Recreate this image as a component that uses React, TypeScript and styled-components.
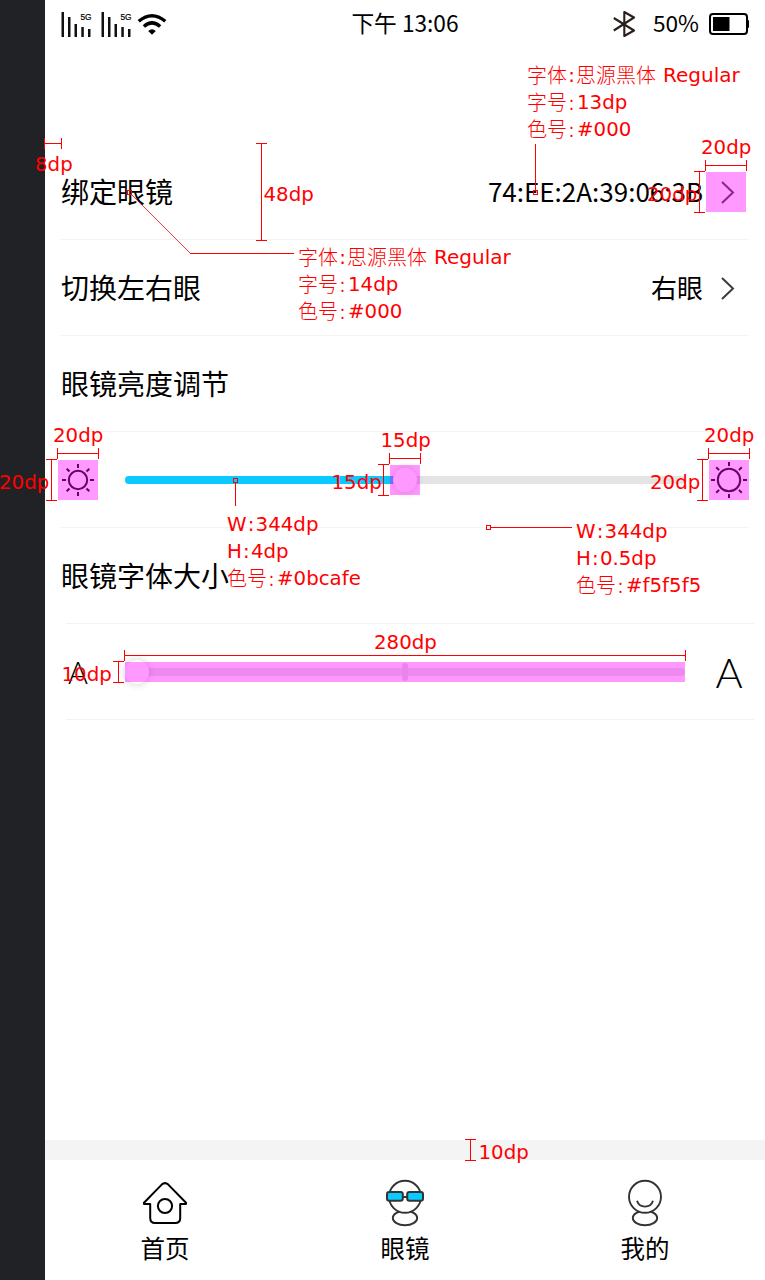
import React from "react";
import styled, { createGlobalStyle } from "styled-components";

const GlobalStyle = createGlobalStyle`
  *, *::before, *::after { box-sizing: border-box; }
  body { margin: 0; background: #fff; }
`;

const Board = styled.div`
  position: relative;
  display: flex;
  width: 765px;
  height: 1280px;
  overflow: hidden;
  color: #000;
  font-family: "Noto Sans CJK SC", sans-serif;
`;

const Gutter = styled.div`
  flex: 0 0 45px;
  background: #212226;
`;

const Screen = styled.div`
  flex: 1;
  display: flex;
  flex-direction: column;
  background: #fff;
`;

const StatusBar = styled.header`
  display: grid;
  grid-template-columns: 1fr auto 1fr;
  align-items: center;
  height: 48px;
  padding: 0 16px;
  margin-bottom: 96px;
  font-size: 23px;
  line-height: 46px;
`;

const Clock = styled.span`
  height: 48px;
  font-size: 22.7px;
`;

const StatusGroup = styled.div<{ $end?: boolean }>`
  display: flex;
  align-items: center;
  justify-content: ${(p) => (p.$end ? "flex-end" : "flex-start")};
`;

const Percent = styled.span`
  height: 48px;
  margin: 0 10px 0 17px;
  font-size: 22.7px;
`;

const Icon = styled.svg`
  display: block;
  flex: none;
  overflow: visible;
`;

const Row = styled.div<{ $lineShift?: boolean }>`
  position: relative;
  display: flex;
  align-items: center;
  height: 96px;
  margin: 0 16px;
  &::after {
    content: "";
    position: absolute;
    left: ${(p) => (p.$lineShift ? 5 : 0)}px;
    right: ${(p) => (p.$lineShift ? -5 : 0)}px;
    bottom: 0;
    height: 1px;
    background: #f3f3f3;
  }
`;

const RowTitle = styled.span`
  flex: 1;
  font-size: 28px;
  line-height: 40px;
  padding-bottom: 2px;
`;

const RowValue = styled.span`
  font-size: 26px;
  line-height: 40px;
  padding-bottom: 2px;
  margin-right: 3px;
`;

const ChevronBox = styled.span`
  width: 40px;
  height: 40px;
  margin-right: 3px;
`;

const SliderCap = styled.div<{ $offset: number; $width: number }>`
  display: flex;
  justify-content: center;
  width: ${(p) => p.$width}px;
  margin-left: ${(p) => p.$offset}px;
`;

const Track = styled.div<{ $gap: number }>`
  position: relative;
  width: 560px;
  height: 8px;
  margin-left: ${(p) => p.$gap}px;
  border-radius: 4px;
  background: #e4e4e4;
`;

const Fill = styled.div`
  width: 50%;
  height: 8px;
  border-radius: 4px;
  background: #0bcafe;
`;

const Knob = styled.div<{ $x: number }>`
  position: absolute;
  left: ${(p) => p.$x - 12}px;
  top: -8px;
  width: 24px;
  height: 24px;
  border-radius: 50%;
  background: #fff;
  box-shadow: 0 0 9px rgba(0, 0, 0, 0.2);
`;

const Tick = styled.div`
  position: absolute;
  left: 277px;
  top: -5px;
  width: 6px;
  height: 18px;
  border-radius: 3px;
  background: #dcdcdc;
`;

const Letter = styled.span<{ $size: number }>`
  font-family: Lato, sans-serif;
  font-weight: 300;
  font-size: ${(p) => p.$size}px;
  line-height: 48px;
`;

const TabBar = styled.nav`
  display: grid;
  grid-template-columns: repeat(3, 1fr);
  height: 140px;
  margin-top: auto;
  border-top: 20px solid #f4f4f4;
`;

const Tab = styled.div`
  display: flex;
  flex-direction: column;
  align-items: center;
  padding-top: 18px;
  font-size: 24.5px;
  line-height: 40px;
`;

/* Redline layer over the screen */

const Highlight = styled.div<{ $x: number; $y: number; $w: number; $h: number }>`
  position: absolute;
  left: ${(p) => p.$x}px;
  top: ${(p) => p.$y}px;
  width: ${(p) => p.$w}px;
  height: ${(p) => p.$h}px;
  background: rgba(255, 0, 255, 0.4);
`;

const Ruler = styled.div<{ $x: number; $y: number; $len: number; $vertical?: boolean }>`
  position: absolute;
  left: ${(p) => p.$x}px;
  top: ${(p) => p.$y}px;
  width: ${(p) => (p.$vertical ? 11 : p.$len)}px;
  height: ${(p) => (p.$vertical ? p.$len : 11)}px;
  border: 0 solid #f00;
  border-width: ${(p) => (p.$vertical ? "1px 0" : "0 1px")};
  &::before {
    content: "";
    position: absolute;
    background: #f00;
    ${(p) =>
      p.$vertical
        ? "left: 5px; top: 0; bottom: 0; width: 1px;"
        : "top: 5px; left: 0; right: 0; height: 1px;"}
  }
`;

const Note = styled.div<{ $x: number; $y: number }>`
  position: absolute;
  left: ${(p) => p.$x}px;
  top: ${(p) => p.$y}px;
  color: #f00;
  font-family: "DejaVu Sans", sans-serif;
  font-size: 19.8px;
  line-height: 27px;
  white-space: nowrap;
`;

const NoteLine = styled.div`
  display: flex;
  height: 27px;
`;

const Han = styled.span`
  font-family: "Noto Sans CJK SC", sans-serif;
  font-weight: 300;
  font-size: 20px;
  line-height: 25px;
`;

const Colon = styled.span`
  width: 9px;
  text-align: center;
`;

const ValueText = styled.span`
  margin-left: 1px;
`;

const FontName = styled.span`
  margin-left: 7px;
  font-size: 20px;
`;

const Leaders = styled.svg`
  position: absolute;
  left: 0;
  top: 0;
`;

const Signal = () => (
  <Icon width="40" height="48" viewBox="0 0 40 48">
    <g fill="#111">
      <rect x="0.5" y="12" width="2.5" height="25" />
      <rect x="7" y="17" width="2.5" height="20" />
      <rect x="13.5" y="24" width="2.5" height="13" />
      <rect x="20.3" y="27" width="2.5" height="10" />
      <rect x="27" y="29" width="2.5" height="8" />
    </g>
    <text
      x="19.5"
      y="19.8"
      fontSize="8.3"
      fontFamily="Liberation Sans, sans-serif"
      fill="#000"
      stroke="#000"
      strokeWidth="0.2"
    >
      5G
    </text>
  </Icon>
);

const Wifi = () => (
  <Icon width="28" height="48" viewBox="141 0 28 48">
    <g transform="translate(0.5 0)" fill="none" stroke="#000" strokeWidth="3.4">
      <path d="M138.2 21.3Q151.5 10.2 164.8 21.3" />
      <path d="M143.4 26.5Q151.5 19.2 159.6 26.5" />
      <path d="M147.7 31Q151.5 27.6 155.3 31L151.5 34.8Z" fill="#000" stroke="none" />
    </g>
  </Icon>
);

const Bluetooth = () => (
  <Icon width="24" height="48" viewBox="612 0 24 48">
    <path
      d="M613.8 18L634 30.5L624.3 36V12L634 17.5L613.8 30.5"
      fill="none"
      stroke="#2a1f1c"
      strokeWidth="2.1"
      strokeLinejoin="round"
    />
  </Icon>
);

const Battery = () => (
  <Icon width="40" height="48" viewBox="709 0 40 48">
    <rect x="710" y="14" width="37" height="20" rx="3" fill="none" stroke="#000" strokeWidth="2" />
    <rect x="713" y="17" width="16.5" height="14" fill="#000" />
    <rect x="747" y="20" width="2" height="8" rx="1" fill="#000" />
  </Icon>
);

const Chevron = () => (
  <ChevronBox>
    <Icon width="40" height="40" viewBox="0 0 40 40">
      <path d="M16 10L27 20.5L16 31" fill="none" stroke="#3c3c3c" strokeWidth="2" />
    </Icon>
  </ChevronBox>
);

const Sun = ({ r, inner, outer }: { r: number; inner: number; outer: number }) => (
  <Icon width="40" height="40" viewBox="-20 -20 40 40">
    <g fill="none" stroke="#000" strokeWidth="2">
      <circle r={r} />
      {[0, 45, 90, 135, 180, 225, 270, 315].map((a) => (
        <path key={a} d={`M0 ${-inner}V${-outer}`} transform={`rotate(${a})`} />
      ))}
    </g>
  </Icon>
);

const HomeIcon = () => (
  <Icon width="48" height="50" viewBox="141 1178 48 50">
    <g fill="none" stroke="#000" strokeWidth="2" strokeLinejoin="round">
      <path d="M144 1204V1202.8L161.7 1184.6Q165 1181.6 168.3 1184.6L186 1202.8V1204H180.2V1218Q180.2 1223 175.2 1223H155.2Q150.2 1223 150.2 1218V1204Z" />
      <circle cx="165" cy="1206" r="7.1" />
    </g>
  </Icon>
);

const PersonIcon = ({ glasses }: { glasses?: boolean }) => (
  <Icon width="48" height="50" viewBox="-24 1178 48 50">
    <g fill="#fff" stroke="#333" strokeWidth="1.9">
      <ellipse cx="0" cy="1218" rx="12.2" ry="7.2" />
      <circle cx="0" cy="1196.8" r="16" />
      {glasses ? (
        <g fill="#0bcafe" strokeWidth="2">
          <path d="M-2.5 1197H2.5" />
          <rect x="-18" y="1192" width="15.8" height="8.8" rx="2.2" />
          <rect x="2.2" y="1192" width="15.8" height="8.8" rx="2.2" />
        </g>
      ) : (
        <path d="M-8 1200.8C-5.5 1208.6 5.5 1208.6 8 1200.8" fill="none" />
      )}
    </g>
  </Icon>
);

const FontNote = ({ x, y, size }: { x: number; y: number; size: string }) => (
  <Note $x={x} $y={y}>
    <NoteLine>
      <Han>字体</Han>
      <Colon>:</Colon>
      <Han>思源黑体</Han>
      <FontName>Regular</FontName>
    </NoteLine>
    <NoteLine>
      <Han>字号</Han>
      <Colon>
        <Han>:</Han>
      </Colon>
      <ValueText>{size}</ValueText>
    </NoteLine>
    <NoteLine>
      <Han>色号</Han>
      <Colon>
        <Han>:</Han>
      </Colon>
      <ValueText>#000</ValueText>
    </NoteLine>
  </Note>
);

const SizeNote = ({ x, y, h, color }: { x: number; y: number; h: string; color: string }) => (
  <Note $x={x} $y={y}>
    <NoteLine>
      W<Colon>:</Colon>344dp
    </NoteLine>
    <NoteLine>
      H<Colon>:</Colon>
      {h}
    </NoteLine>
    <NoteLine>
      <Han>色号</Han>
      <Colon>
        <Han>:</Han>
      </Colon>
      <ValueText>{color}</ValueText>
    </NoteLine>
  </Note>
);

const highlights = [
  [706, 172, 40, 40],
  [58, 460, 40, 40],
  [390, 465, 30, 30],
  [709, 460, 40, 40],
  [125, 662, 560, 20],
];

const rulers: [number, number, number, boolean][] = [
  [44, 138, 18, false],
  [256, 143, 98, true],
  [705, 160, 42, false],
  [694, 171, 42, true],
  [57, 448, 42, false],
  [46, 459, 42, true],
  [389, 453, 32, false],
  [378, 464, 32, true],
  [708, 448, 42, false],
  [697, 459, 42, true],
  [124, 650, 562, false],
  [113, 661, 22, true],
  [465, 1139, 22, true],
];

const measures: [number, number, string][] = [
  [35, 151, "8dp"],
  [263.5, 181, "48dp"],
  [701, 134, "20dp"],
  [647, 181, "20dp"],
  [53, 422, "20dp"],
  [-1, 469, "20dp"],
  [380.5, 427, "15dp"],
  [331.5, 469, "15dp"],
  [704, 422, "20dp"],
  [650, 469, "20dp"],
  [374, 629, "280dp"],
  [61.5, 661, "10dp"],
  [478.5, 1139, "10dp"],
];

export default function App() {
  return (
    <>
      <GlobalStyle />
      <Board>
        <Gutter />
        <Screen>
          <StatusBar>
            <StatusGroup>
              <Signal />
              <Signal />
              <Wifi />
            </StatusGroup>
            <Clock>下午 13:06</Clock>
            <StatusGroup $end>
              <Bluetooth />
              <Percent>50%</Percent>
              <Battery />
            </StatusGroup>
          </StatusBar>

          <Row>
            <RowTitle>绑定眼镜</RowTitle>
            <RowValue>74:EE:2A:39:06:3B</RowValue>
            <Chevron />
          </Row>
          <Row>
            <RowTitle>切换左右眼</RowTitle>
            <RowValue>右眼</RowValue>
            <Chevron />
          </Row>
          <Row>
            <RowTitle>眼镜亮度调节</RowTitle>
          </Row>
          <Row>
            <SliderCap $offset={-3} $width={40}>
              <Sun r={9.2} inner={12} outer={16} />
            </SliderCap>
            <Track $gap={27}>
              <Fill />
              <Knob $x={280} />
            </Track>
            <SliderCap $offset={24} $width={40}>
              <Sun r={11.2} inner={14} outer={18} />
            </SliderCap>
          </Row>
          <Row $lineShift>
            <RowTitle>眼镜字体大小</RowTitle>
          </Row>
          <Row $lineShift>
            <SliderCap $offset={-3} $width={40}>
              <Letter $size={30.5}>A</Letter>
            </SliderCap>
            <Track $gap={27}>
              <Tick />
              <Knob $x={12} />
            </Track>
            <SliderCap $offset={24} $width={40}>
              <Letter $size={41.5}>A</Letter>
            </SliderCap>
          </Row>

          <TabBar>
            <Tab>
              <HomeIcon />
              首页
            </Tab>
            <Tab>
              <PersonIcon glasses />
              眼镜
            </Tab>
            <Tab>
              <PersonIcon />
              我的
            </Tab>
          </TabBar>
        </Screen>

        {highlights.map(([x, y, w, h]) => (
          <Highlight key={`${x}-${y}`} $x={x} $y={y} $w={w} $h={h} />
        ))}
        {rulers.map(([x, y, len, vertical]) => (
          <Ruler key={`${x}-${y}`} $x={x} $y={y} $len={len} $vertical={vertical} />
        ))}
        <Leaders width="765" height="1280" fill="none" stroke="#f00">
          <path d="M535.5 144V190M235.5 483V506M491 527.5H572M190 253.5H294" />
          <path d="M131 194L190.5 253.5" strokeWidth="0.8" />
          <rect x="533.5" y="190.5" width="4" height="4" />
          <rect x="127.5" y="190.5" width="4" height="4" />
          <rect x="233.5" y="478.5" width="4" height="4" />
          <rect x="486.5" y="525.5" width="4" height="4" />
        </Leaders>
        {measures.map(([x, y, label]) => (
          <Note key={`${x}-${y}`} $x={x} $y={y}>
            {label}
          </Note>
        ))}
        <FontNote x={527} y={62} size="13dp" />
        <FontNote x={298} y={244} size="14dp" />
        <SizeNote x={227} y={511} h="4dp" color="#0bcafe" />
        <SizeNote x={576} y={518} h="0.5dp" color="#f5f5f5" />
      </Board>
    </>
  );
}
